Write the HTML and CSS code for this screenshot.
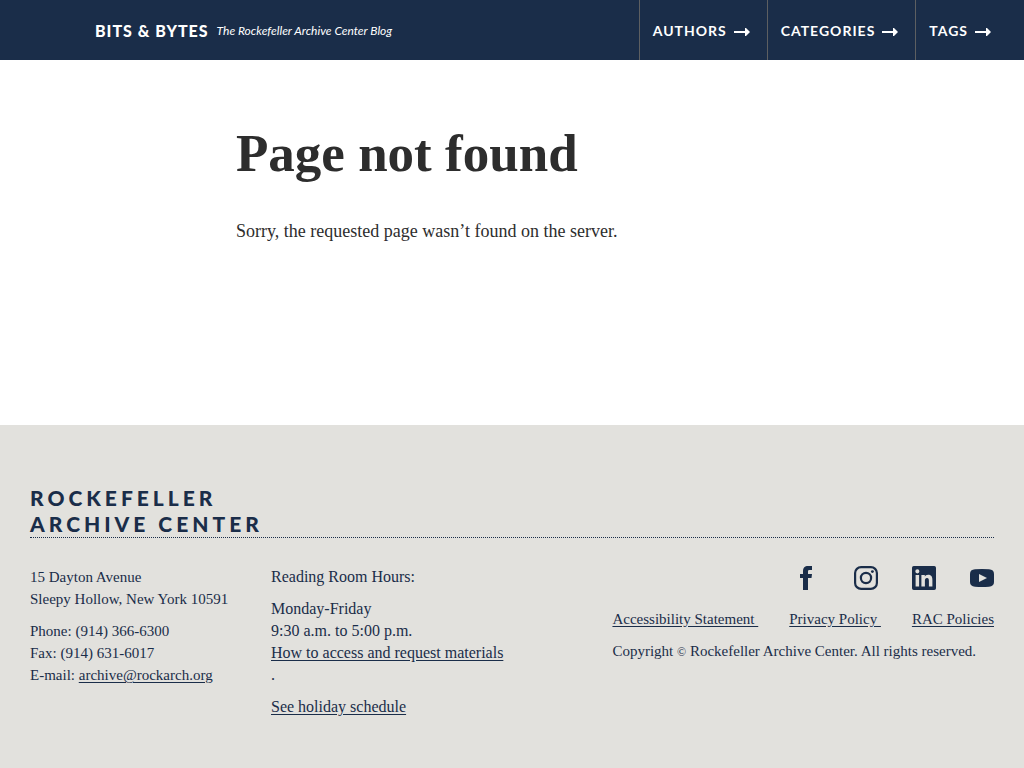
FILE: index.html
```html
<!DOCTYPE html>
<html lang="en">
<head>
<meta charset="utf-8">
<meta name="viewport" content="width=device-width, initial-scale=1">
<title>Page not found | Bits &amp; Bytes</title>
<link rel="stylesheet" href="styles.css">
</head>
<body>
<header class="header">
  <div class="brand">
    <a class="brand-title" href="#">Bits &amp; Bytes</a>
    <span class="brand-tagline">The Rockefeller Archive Center Blog</span>
  </div>
  <nav class="nav" aria-label="Main">
    <a class="nav-link" href="#">Authors <svg class="arrow" viewBox="0 0 16 8" aria-hidden="true"><path d="M0 3h11V0h1l4 4-4 4h-1V5H0z"/></svg></a>
    <a class="nav-link" href="#">Categories <svg class="arrow" viewBox="0 0 16 8" aria-hidden="true"><path d="M0 3h11V0h1l4 4-4 4h-1V5H0z"/></svg></a>
    <a class="nav-link" href="#">Tags <svg class="arrow" viewBox="0 0 16 8" aria-hidden="true"><path d="M0 3h11V0h1l4 4-4 4h-1V5H0z"/></svg></a>
  </nav>
</header>
<main class="main">
  <h1 class="title">Page not found</h1>
  <p class="message">Sorry, the requested page wasn’t found on the server.</p>
</main>
<footer class="footer">
  <div class="footer-brand"><a class="footer-logo" href="#">Rockefeller<br>Archive Center</a></div>
  <div class="footer-columns">
    <address class="contact">
      <p>15 Dayton Avenue<br>Sleepy Hollow, New York 10591</p>
      <p>Phone: (914) 366-6300<br>Fax: (914) 631-6017<br>E-mail: <a href="mailto:archive@rockarch.org">archive@rockarch.org</a></p>
    </address>
    <div class="hours">
      <p>Reading Room Hours:</p>
      <p>Monday-Friday<br>9:30 a.m. to 5:00 p.m.<br><a href="#">How to access and request materials</a><br>.</p>
      <p><a href="#">See holiday schedule</a></p>
    </div>
    <div class="legal">
      <div class="social">
        <a href="#" aria-label="Facebook"><svg class="icon icon-facebook" viewBox="0 0 12 24"><path d="M3 24V12H0V8h3V5.500C3 1.500 4.800 0 8 0h4v4H9.500C8.300 4 8 4.500 8 5.500V8h4l-.5 4H8v12z"/></svg></a>
        <a href="#" aria-label="Instagram"><svg class="icon" viewBox="0 0 24 24"><rect x="1.100" y="1.100" width="21.800" height="21.800" rx="6" fill="none" stroke="currentColor" stroke-width="2.200"/><circle cx="12" cy="12" r="5.100" fill="none" stroke="currentColor" stroke-width="2.200"/><circle cx="18.400" cy="5.600" r="1.440"/></svg></a>
        <a href="#" aria-label="LinkedIn"><svg class="icon" viewBox="0 0 24 24"><path fill-rule="evenodd" d="M1.800 0h20.400Q24 0 24 1.800v20.400Q24 24 22.200 24H1.800Q0 24 0 22.200V1.800Q0 0 1.800 0zM3.600 9v11.400h3.500V9zM5.350 3.300a2.050 2.050 0 1 0 0 4.100 2.050 2.050 0 0 0 0-4.100zM9.400 9v11.400h3.500v-5.600c0-1.500.3-2.900 2.100-2.900s1.900 1.600 1.900 3v5.500h3.500v-6.200c0-3.100-.7-5.500-4.300-5.500-1.700 0-2.800.9-3.300 1.800V9z"/></svg></a>
        <a href="#" aria-label="YouTube"><svg class="icon" viewBox="0 0 24 24"><path fill-rule="evenodd" d="M5 3.300Q12 2.700 19 3.300Q24 3.600 24 8v8q0 4.400-5 4.700Q12 21.300 5 20.700Q0 20.400 0 16V8Q0 3.600 5 3.300zM9 8v8l8-4z"/></svg></a>
      </div>
      <div class="policies">
        <a href="#">Accessibility Statement&nbsp;</a>
        <a href="#">Privacy Policy&nbsp;</a>
        <a href="#">RAC Policies</a>
      </div>
      <p>Copyright <span class="mark">©</span> Rockefeller Archive Center. All rights reserved.</p>
    </div>
  </div>
</footer>
</body>
</html>
```
FILE: styles.css
```css
* { box-sizing: border-box; }
html { height: 100%; }
body {
  margin: 0;
  min-height: 100%;
  display: flex;
  flex-direction: column;
  background: #fff;
  color: #2d2d2d;
  font-family: "Liberation Serif", serif;
}
p { margin: 0; }
.header {
  display: flex;
  justify-content: space-between;
  min-height: 60px;
  padding: 0 16px 0 95px;
  background: #1a2d49;
  color: #fff;
  font-family: Lato, sans-serif;
}
.header a { color: inherit; text-decoration: none; text-transform: uppercase; }
.brand { display: flex; align-items: center; gap: 8px; }
.brand-title { font-size: 16px; font-weight: 900; letter-spacing: 1px; }
.brand-tagline { font-size: 12px; font-style: italic; }
.nav { display: flex; }
.nav-link {
  display: flex;
  align-items: center;
  gap: 7px;
  padding: 0 17px 0 13px;
  border-left: 1px solid #5d5f61;
  font-size: 14px;
  font-weight: 700;
  letter-spacing: 1px;
}
.arrow { width: 16px; height: 8px; margin-top: 4px; fill: currentColor; }
.main { flex: 1 0 auto; padding: 60px 30px 60px 236px; }
.title { margin: 0; font-size: 53px; line-height: 66px; font-weight: 700; }
.message { margin-top: 32px; font-size: 18px; line-height: 26px; }
.footer {
  padding: 60px 30px 50px;
  background: #e2e1dd;
  color: #1a2d49;
  font-size: 16px;
  line-height: 22px;
}
.footer a { color: inherit; }
.footer-brand { border-bottom: 1px dotted #1a2d49; }
.footer .footer-logo {
  display: block;
  font-family: Lato, sans-serif;
  font-size: 21px;
  line-height: 26px;
  font-weight: 900;
  letter-spacing: 4px;
  text-transform: uppercase;
  text-decoration: none;
}
.footer-columns { display: flex; padding-top: 28px; }
.contact, .hours { flex: 0 0 25%; font-style: normal; }
.contact, .legal { font-size: 15px; }
.contact p + p, .hours p + p { margin-top: 10px; }
.footer-columns a { text-underline-offset: 2px; }
.legal { margin-left: auto; }
.social { display: flex; justify-content: flex-end; gap: 34px; margin-bottom: 18px; }
.social a { display: block; height: 24px; }
.icon { display: block; width: 24px; height: 24px; fill: currentColor; }
.icon-facebook { width: 12px; margin-right: 8px; }
.policies { display: flex; justify-content: space-between; gap: 31px; margin-bottom: 10px; }
.mark { font-size: 12px; }
```
